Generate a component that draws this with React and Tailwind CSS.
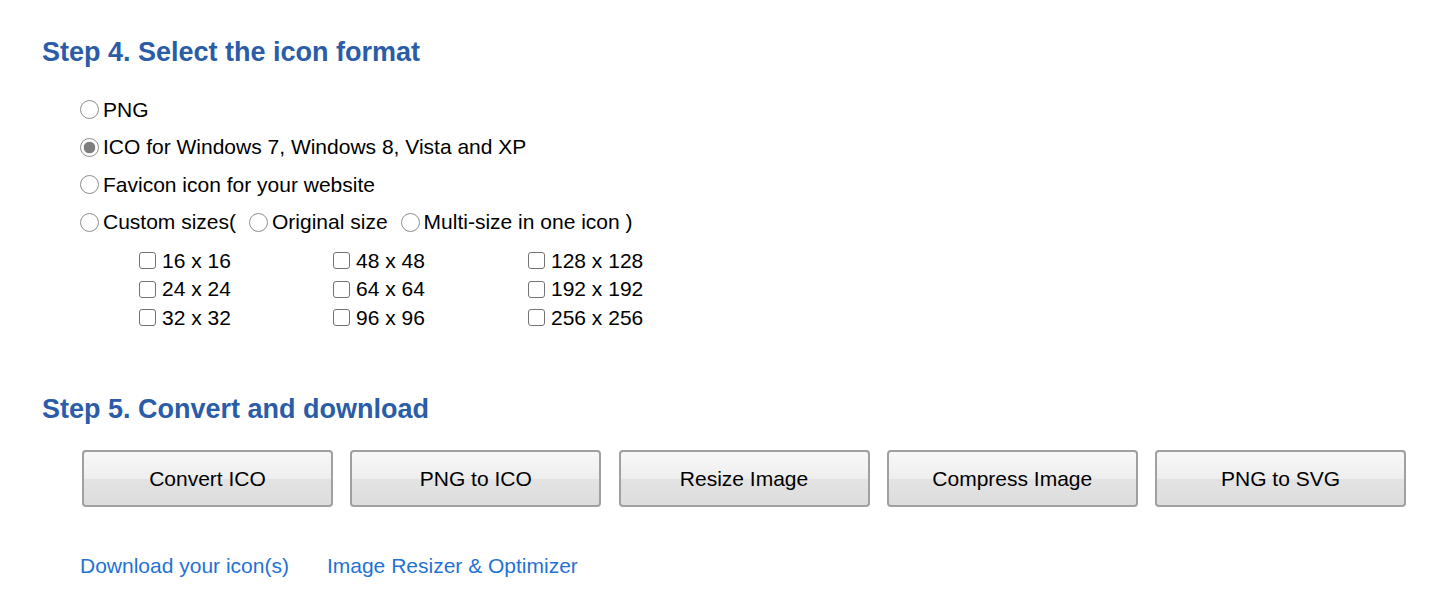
import { useState } from "react";

const formats = [
  { id: "png", label: "PNG" },
  { id: "ico", label: "ICO for Windows 7, Windows 8, Vista and XP" },
  { id: "fav", label: "Favicon icon for your website" },
];

const sizes = [
  ["16 x 16", "48 x 48", "128 x 128"],
  ["24 x 24", "64 x 64", "192 x 192"],
  ["32 x 32", "96 x 96", "256 x 256"],
];

const buttons = ["Convert ICO", "PNG to ICO", "Resize Image", "Compress Image", "PNG to SVG"];

function Radio({ checked, onClick }) {
  return (
    <span
      onClick={onClick}
      className="mr-[4px] flex h-[19px] w-[19px] shrink-0 cursor-pointer items-center justify-center rounded-full border border-[#8d8d8d] bg-white"
    >
      {checked ? <span className="h-[11px] w-[11px] rounded-full bg-[#7e7e7e] shadow-[0_0_1px_#555]" /> : null}
    </span>
  );
}

function Checkbox({ checked, onClick }) {
  return (
    <span
      onClick={onClick}
      className="mr-[6px] flex h-[17px] w-[17px] shrink-0 cursor-pointer items-center justify-center rounded-[3px] border border-[#737373] bg-white"
    >
      {checked ? (
        <svg viewBox="0 0 16 16" className="h-[13px] w-[13px]" fill="none" stroke="#333" strokeWidth="2">
          <path d="M3 8l3 3 7-7" />
        </svg>
      ) : null}
    </span>
  );
}

export default function App() {
  const [format, setFormat] = useState("ico");
  const [picked, setPicked] = useState({});

  const toggle = (s) => setPicked({ ...picked, [s]: !picked[s] });

  return (
    <div className="min-h-screen bg-white pl-[42px] font-['Liberation_Sans',Arial,sans-serif] text-[21px] text-black">
      <h2 className="pt-[36px] text-[27px] font-bold leading-[32px] text-[#2a5ca8]">Step 4. Select the icon format</h2>

      <div className="mt-[23px] ml-[38px]">
        {formats.map((f) => (
          <div key={f.id} className="flex h-[37.5px] items-center leading-[24px]">
            <Radio checked={format === f.id} onClick={() => setFormat(f.id)} />
            <span>{f.label}</span>
          </div>
        ))}
        <div className="flex h-[37.5px] items-center leading-[24px]">
          <Radio checked={format === "custom"} onClick={() => setFormat("custom")} />
          <span>Custom sizes(</span>
          <span className="ml-[13px] flex items-center">
            <Radio checked={format === "orig"} onClick={() => setFormat("orig")} />
            <span>Original size</span>
          </span>
          <span className="ml-[13px] flex items-center">
            <Radio checked={format === "multi"} onClick={() => setFormat("multi")} />
            <span>Multi-size in one icon )</span>
          </span>
        </div>
      </div>

      <div className="mt-[5.5px] ml-[97px]">
        {sizes.map((row, i) => (
          <div key={i} className="grid h-[28.5px] grid-cols-[194px_195px_195px] items-center leading-[24px]">
            {row.map((s) => (
              <div key={s} className="flex items-center">
                <Checkbox checked={!!picked[s]} onClick={() => toggle(s)} />
                <span>{s}</span>
              </div>
            ))}
          </div>
        ))}
      </div>

      <h2 className="mt-[61px] text-[27px] font-bold leading-[32px] text-[#2a5ca8]">Step 5. Convert and download</h2>

      <div className="mt-[25px] ml-[40px] flex gap-[17.25px]">
        {buttons.map((b) => (
          <button
            key={b}
            className="h-[57px] w-[251px] cursor-pointer rounded-[4px] border-2 border-[#a0a0a0] bg-[linear-gradient(to_bottom,#f8f8f8_0%,#eeeeee_50%,#e3e3e3_50%,#dddddd_100%)] text-[21px] text-black"
          >
            {b}
          </button>
        ))}
      </div>

      <div className="mt-[47px] ml-[38px] flex gap-[38px] leading-[24px] text-[#1f72d6]">
        <a href="#" className="hover:underline">Download your icon(s)</a>
        <a href="#" className="hover:underline">Image Resizer &amp; Optimizer</a>
      </div>
    </div>
  );
}
